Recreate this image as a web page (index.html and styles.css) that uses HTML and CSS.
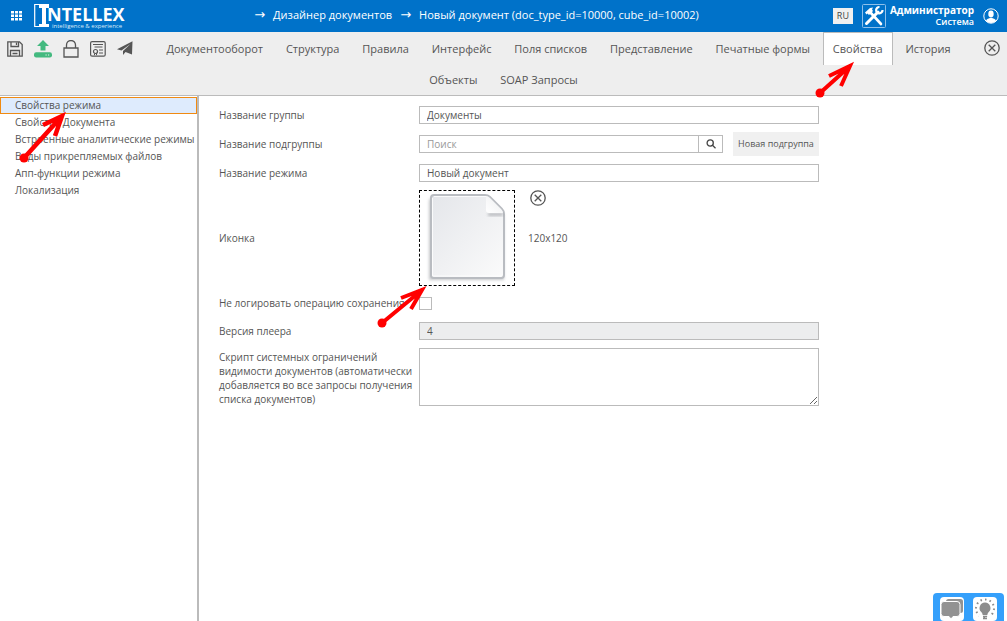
FILE: index.html
```html
<!DOCTYPE html>
<html lang="ru">
<head>
<meta charset="utf-8">
<meta name="viewport" content="width=device-width, initial-scale=1">
<title>Новый документ</title>
<link rel="stylesheet" href="styles.css">
</head>
<body>
<header class="topbar">
  <div class="brand">
    <button class="bare" type="button" aria-label="Меню">
      <svg width="12" height="10" viewBox="0 0 12 10" fill="#fff"><path d="M0 0h3v2.500H0zM4 0h3v2.500H4zM8 0h3v2.500H8zM0 3.500h3v2.500H0zM4 3.500h3v2.500H4zM8 3.500h3v2.500H8zM0 7h3v2.500H0zM4 7h3v2.500H4zM8 7h3v2.500H8z"/></svg>
    </button>
    <a class="logo" href="#" aria-label="Intellex">
      <svg width="94" height="26" viewBox="0 0 94 26">
        <path d="M8 1.500H.700v22H13" fill="none" stroke="#fff" stroke-width="1.200"/>
        <path d="M5 1h10v4h-3v16h3v3H5v-3h3V5H5z" fill="#fff"/>
        <text class="logo-name" x="13" y="18">NTELLEX</text>
        <text class="logo-tag" x="18" y="25">intelligence &amp; experience</text>
      </svg>
    </a>
  </div>
  <nav class="crumbs" aria-label="Путь">
    <span>→</span><a href="#">Дизайнер документов</a><span>→</span><a href="#">Новый документ (doc_type_id=10000, cube_id=10002)</a>
  </nav>
  <div class="account">
    <button class="lang" type="button">RU</button>
    <button class="bare" type="button" aria-label="Инструменты">
      <svg width="24" height="24" viewBox="0 0 24 24" fill="none" stroke="#fff"><rect x=".5" y=".5" width="23" height="23" rx="1" stroke="#8fc0ea"/><path d="M8 8l11 12" stroke-width="2.600" stroke-linecap="round"/><path d="M3 8.500l5-4.500 3-.5-1 2 1 1.500-4 4-1.500-1.500-1 1z" fill="#fff" stroke="none"/><path d="M4.500 19.500L16 8" stroke-width="3" stroke-linecap="round"/><path d="M20.500 6a3.200 3.200 0 1 1-3-3" stroke-width="2.200"/></svg>
    </button>
    <div class="who"><strong>Администратор</strong><span>Система</span></div>
    <button class="bare" type="button" aria-label="Профиль">
      <svg width="16" height="16" viewBox="0 0 16 16"><circle cx="8" cy="8" r="7.200" fill="none" stroke="#fff"/><ellipse cx="8" cy="6" rx="2.700" ry="3.400" fill="#fff"/><path d="M3 13c.5-2 2-2.500 4-3h2c2 .5 3.500 1 4 3a7 7 0 0 1-10 0z" fill="#fff"/></svg>
    </button>
  </div>
</header>

<div class="toolbar">
  <div class="tools">
    <button class="bare" type="button" aria-label="Сохранить">
      <svg width="16" height="16" viewBox="0 0 16 16" fill="none" stroke="#555" stroke-width="1.300"><path d="M.8.8h11.700l2.700 2.700v11.700H.8z"/><path d="M4 1v4.500h7.500V1M3.500 15v-5.500h9V15M5.500 12.500h5"/><path d="M9.500 1.500v2.500"/></svg>
    </button>
    <button class="bare" type="button" aria-label="Выгрузить">
      <svg width="18" height="18" viewBox="0 0 18 18"><path d="M9 0l6 6h-3.500v4.500h-5V6H3z" fill="#43b97f"/><rect y="12.300" width="18" height="5.200" rx="2.200" fill="#43b97f"/><path d="M11.500 15h1.200M14 15h1.200" stroke="#eee" stroke-width="1.200"/></svg>
    </button>
    <button class="bare" type="button" aria-label="Заблокировать">
      <svg width="16" height="18" viewBox="0 0 16 18" fill="none" stroke="#555" stroke-width="1.300"><path d="M1 8h14v9H1zM3.500 8V5a4.500 4.500 0 0 1 9 0v3"/></svg>
    </button>
    <button class="bare" type="button" aria-label="Сертификат">
      <svg width="16" height="16" viewBox="0 0 16 16" fill="none" stroke="#555"><rect x=".6" y=".6" width="14.600" height="14.600" rx="1.500" stroke-width="1.200"/><path d="M3 3.500h10M4.500 6h8M9 9h4M9 12h4"/><circle cx="5.500" cy="10.500" r="2" stroke-width="1.200"/><path d="M4.500 12.500v1.700M6.500 12.500v1.700"/></svg>
    </button>
    <button class="bare" type="button" aria-label="Отправить">
      <svg width="16" height="15" viewBox="0 0 16 15" fill="#555"><path d="M15.500.3L0 8.300l4.500 1.200L13.500 3 6 10v4l2.500-3L15 13.500z"/></svg>
    </button>
  </div>
  <button class="bare close" type="button" aria-label="Закрыть">
    <svg width="16" height="16" viewBox="0 0 16 16" fill="none" stroke="#555" stroke-width="1.300"><circle cx="8" cy="8" r="7.200"/><path d="M4.700 4.700l6.600 6.600M11.300 4.700l-6.600 6.600"/></svg>
  </button>
  <nav class="tabs" aria-label="Разделы">
    <a href="#">Документооборот</a>
    <a href="#">Структура</a>
    <a href="#">Правила</a>
    <a href="#">Интерфейс</a>
    <a href="#">Поля списков</a>
    <a href="#">Представление</a>
    <a href="#">Печатные формы</a>
    <a href="#" class="active" aria-current="page">Свойства</a>
    <a href="#">История</a>
    <a href="#">Объекты</a>
    <a href="#">SOAP Запросы</a>
  </nav>
</div>

<div class="workspace">
  <nav class="side" aria-label="Свойства">
    <a href="#" class="active">Свойства режима</a>
    <a href="#">Свойства Документа</a>
    <a href="#">Встроенные аналитические режимы</a>
    <a href="#">Виды прикрепляемых файлов</a>
    <a href="#">Апп-функции режима</a>
    <a href="#">Локализация</a>
  </nav>
  <main class="content">
    <form class="form">
      <div class="row"><label for="group">Название группы</label><input class="field" id="group" type="text" value="Документы"></div>
      <div class="row"><label for="subgroup">Название подгруппы</label>
        <div class="combo">
          <div class="search"><input class="field" id="subgroup" type="text" placeholder="Поиск"><button class="find" type="button" aria-label="Найти"><svg width="10" height="10" viewBox="0 0 10 10" fill="none" stroke="#444" stroke-width="1.300"><circle cx="4.200" cy="4" r="3.100"/><path d="M6.500 6.300l3 3"/></svg></button></div>
          <button class="new" type="button">Новая подгруппа</button>
        </div>
      </div>
      <div class="row"><label for="mode">Название режима</label><input class="field" id="mode" type="text" value="Новый документ"></div>
      <div class="row picture"><span>Иконка</span>
        <div class="icon-pick">
          <button class="drop" type="button" aria-label="Выбрать иконку">
            <svg width="94" height="94" viewBox="0 0 94 94">
              <defs>
                <linearGradient id="paper" x1="0" y1="0" x2="1" y2="1"><stop offset="0" stop-color="#e4e6ea"/><stop offset="1" stop-color="#fbfbfb"/></linearGradient>
                <linearGradient id="fold" x1="0" y1="1" x2="1" y2="0"><stop offset="0" stop-color="#fff"/><stop offset=".6" stop-color="#f4f5f6"/><stop offset="1" stop-color="#c8cacd"/></linearGradient>
                <filter id="soft" x="-20%" y="-20%" width="140%" height="140%"><feGaussianBlur stdDeviation="1.600"/></filter>
              </defs>
              <path d="M12 6h54l18 18v65H9V9z" fill="#a5a8ac" opacity=".65" filter="url(#soft)"/>
              <path d="M14 4h51q3 0 5 2l12 12q2 2 2 5v61q0 3-3 3H14q-3 0-3-3V7q0-3 3-3z" fill="url(#paper)" stroke="#b9bcc1" stroke-width="2"/>
              <path d="M14 5.500h52M12.500 7v78H82" fill="none" stroke="#fff" opacity=".8"/>
              <path d="M68 22h15v3H68z" fill="#8f9297" opacity=".6" filter="url(#soft)"/>
              <path d="M66 5q2 0 4 2l11 11q2 2 2 4H69q-3 0-3-3z" fill="url(#fold)"/>
            </svg>
          </button>
          <div class="icon-info">
            <button class="bare remove" type="button" aria-label="Удалить иконку">
              <svg width="16" height="16" viewBox="0 0 16 16" fill="none" stroke="#555" stroke-width="1.300"><circle cx="8" cy="8" r="7.200"/><path d="M4.700 4.700l6.600 6.600M11.300 4.700l-6.600 6.600"/></svg>
            </button>
            <span>120x120</span>
          </div>
        </div>
      </div>
      <div class="row tight"><label for="nolog">Не логировать операцию сохранения</label><input class="check" id="nolog" type="checkbox"></div>
      <div class="row tight"><label for="player">Версия плеера</label><input class="field" id="player" type="text" value="4" disabled></div>
      <div class="row script"><label for="script">Скрипт системных ограничений видимости документов (автоматически добавляется во все запросы получения списка документов)</label><textarea class="area" id="script"></textarea></div>
    </form>
  </main>
</div>

<svg class="arrow arrow-tab" width="40" height="40" viewBox="0 0 40 40"><circle cx="5" cy="33" r="4.500" fill="red"/><path d="M5 33L35 6M14 16L35 6 26 26" fill="none" stroke="red" stroke-width="4"/></svg>
<svg class="arrow arrow-side" width="50" height="54" viewBox="0 0 50 54"><circle cx="5" cy="47" r="4.500" fill="red"/><path d="M5 47L43 5M24 14L43 5 36 25" fill="none" stroke="red" stroke-width="4.500"/></svg>
<svg class="arrow arrow-icon" width="54" height="44" viewBox="0 0 54 44"><circle cx="5" cy="37" r="4.500" fill="red"/><path d="M5 37L45 4M24 12L45 4 34 23" fill="none" stroke="red" stroke-width="4"/></svg>

<div class="dock">
  <button type="button" aria-label="Чат"><svg width="24" height="24" viewBox="0 0 24 24"><rect x="6" y="2" width="17" height="14" rx="2.500" fill="#929292"/><path d="M4 4.500h13q3 0 3 3v9q0 3-3 3h-4L11 22l-2-2.500H4q-3 0-3-3v-9q0-3 3-3z" fill="#929292" stroke="#fff"/></svg></button>
  <button type="button" aria-label="Подсказка"><svg width="24" height="24" viewBox="0 0 24 24"><path d="M12 5.500a5.500 5.500 0 0 0-3.500 9.700q1 1 1.200 2.800h4.600q.2-1.800 1.200-2.800A5.500 5.500 0 0 0 12 5.500z" fill="#8c8c8c"/><path d="M10 19.500h4M10 21.500h4" stroke="#8c8c8c" stroke-width="1.500"/><circle cx="12" cy="11.500" r="9" fill="none" stroke="#8c8c8c" stroke-width="2" stroke-dasharray="1.500 3" pathLength="54"/><path d="M6 18h3v6H6zM15 18h3v6h-3z" fill="#fff"/></svg></button>
</div>
</body>
</html>
```
FILE: styles.css
```css
* { box-sizing: border-box; }
body {
  margin: 0;
  min-height: 100vh;
  display: flex;
  flex-direction: column;
  font: 10px/14px "Open Sans", "Noto Sans", sans-serif;
  color: #555;
  background: #fff;
}
a { color: inherit; text-decoration: none; }
button, input, textarea { font: inherit; color: inherit; margin: 0; }
svg { display: block; }
.bare { padding: 0; border: 0; background: none; }

.topbar {
  display: grid;
  grid-template-columns: 126px 1fr 180px;
  align-items: center;
  height: 32px;
  background: #0072c9;
  color: #fff;
}
.brand { display: flex; align-items: center; gap: 11px; padding-left: 11px; }
.logo-name { font: bold 18px "Open Sans", sans-serif; fill: #fff; }
.logo-tag { font: 6px "Open Sans", sans-serif; fill: #dcebf8; }
.crumbs {
  display: flex;
  justify-content: center;
  gap: 8px;
  font-size: 11px;
  font-weight: 500;
  white-space: nowrap;
  padding-bottom: 3px;
}
.crumbs span { font-family: "DejaVu Sans", sans-serif; font-size: 13px; font-weight: 400; }
.account { display: flex; align-items: center; justify-content: flex-end; gap: 9px; padding-right: 8px; height: 30px; }
.account .bare { flex: none; }
.lang { flex: none; width: 20px; height: 16px; padding: 0; border: 0; background: #f0f0f0; color: #444; line-height: 14px; font-size: 9px; }
.who { display: flex; flex-direction: column; text-align: right; margin-left: -5px; line-height: 12px; font-size: 9px; font-weight: 600; }
.who strong { font-size: 10px; font-weight: 700; }

.toolbar { padding-bottom: 1px; background: #eee; border-bottom: 1px solid #bbb; }
.tools { float: left; display: flex; align-items: center; gap: 11px; height: 30px; padding: 3px 10px 0 7px; }
.close { float: right; padding: 8px 7px 0 10px; }
.tabs { text-align: center; font-size: 11px; line-height: 31px; }
.tabs a { display: inline-block; vertical-align: top; height: 31px; padding: 0 9px; border: solid transparent; border-width: 1px 1px 0; }
.tabs .active { background: #fff; border-color: #bbb; height: 33px; margin-bottom: -2px; }

.workspace { flex: 1; display: flex; }
.side { width: 199px; flex: none; padding-top: 1px; border-right: 2px solid #bbb; }
.side a { display: block; padding: 0 14px; border: 1px solid transparent; line-height: 15px; white-space: nowrap; }
.side .active { background: #deebfd; border-color: #f08a12; }

.content { flex: 1; padding: 4px 20px; }
.form { max-width: 600px; }
.row { display: grid; grid-template-columns: 198px 1fr; column-gap: 2px; align-items: center; min-height: 29px; }
.tight { min-height: 28px; }
.field { display: block; width: 100%; height: 18px; padding: 0 7px; border: 1px solid #bbb; border-radius: 0; background: #fff; outline: 0; }
.field::placeholder { color: #999; opacity: 1; }
.field:disabled { background: #ecedee; color: #555; }
.combo { display: flex; gap: 10px; }
.search { flex: 1; display: flex; align-items: center; }
.find { flex: none; width: 24px; height: 18px; display: grid; place-items: center; padding: 0; border: 1px solid #bbb; border-left: 0; background: #fff; }
.new { width: 86px; height: 24px; padding: 0; border: 0; background: #f0f0f0; white-space: nowrap; font-size: 9px; }
.picture { min-height: 102px; }
.icon-pick { display: flex; gap: 13px; }
.drop { padding: 0; border: 1px dashed #000; background: #fff; }
.icon-info { display: flex; flex-direction: column; gap: 25px; }
.remove { padding-left: 2px; }
.check { appearance: none; width: 13px; height: 13px; border: 1px solid #bbb; background: #fff; }
.script { align-items: start; padding-top: 3px; }
.script label { padding-top: 2px; }
.area { display: block; width: 100%; height: 58px; padding: 4px; border: 1px solid #bbb; border-radius: 0; resize: both; }

.arrow { position: absolute; pointer-events: none; }
.arrow-tab { left: 815px; top: 60px; }
.arrow-side { left: 19px; top: 111px; }
.arrow-icon { left: 377px; top: 286px; }

.dock { position: fixed; right: 3px; bottom: 0; display: flex; gap: 9px; padding: 4px 7px 0; background: #35a0fb; border-radius: 4px 4px 0 0; }
.dock button { padding: 0; border: 0; background: #fff; border-radius: 4px; }
```
